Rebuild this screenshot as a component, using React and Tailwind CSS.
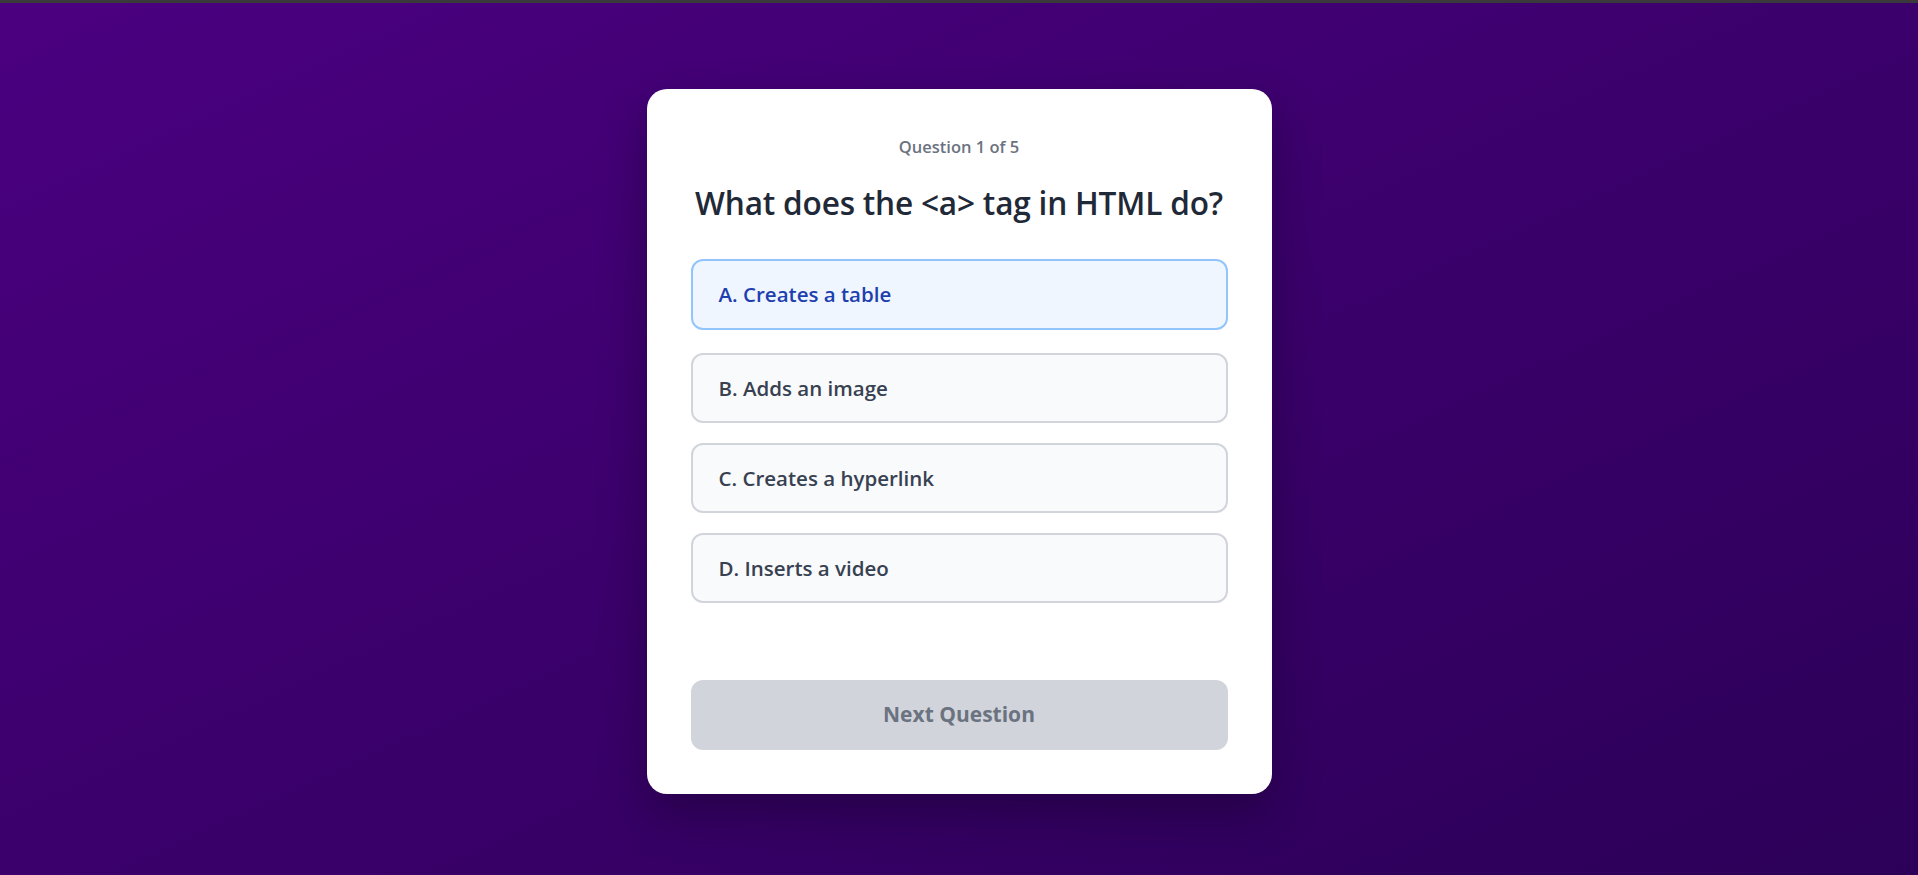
import React from "react";

const options = [
  { label: "A. Creates a table", selected: true },
  { label: "B. Adds an image" },
  { label: "C. Creates a hyperlink" },
  { label: "D. Inserts a video" },
];

export default function App() {
  return (
    <div
      className="w-full h-[875px] overflow-hidden flex flex-col bg-gradient-to-br from-[#4b0080] to-[#2c0058]"
      style={{ fontFamily: '"Open Sans", "Noto Sans", sans-serif' }}
    >
      <div className="h-[3px] w-full bg-[#3a3a3c]" />
      <div className="flex justify-center pt-[86px]">
        <div className="w-[625px] bg-white rounded-[20px] shadow-[0_20px_45px_rgba(20,0,40,0.45)] px-[44px] pt-[45px] pb-[44px]">
          <p className="text-center text-[16.5px] leading-[25px] font-semibold text-[#6b7280]">
            Question 1 of 5
          </p>
          <h1 className="mt-[24px] text-center text-[31.6px] leading-[40px] font-semibold text-[#1f2937] tracking-[-0.2px]">
            What does the &lt;a&gt; tag in HTML do?
          </h1>
          <div className="mt-[36px] flex flex-col">
            {options.map((o, i) => (
              <button
                key={o.label}
                className={`h-[70px] w-full text-left pl-[26px] rounded-[12px] border-2 text-[20.5px] font-semibold ${
                  o.selected
                    ? "bg-[#eff6ff] border-[#93c5fd] text-[#1e40af] h-[71px]"
                    : "bg-[#f9fafb] border-[#d1d5db] text-[#374151]"
                } ${i === 1 ? "mt-[23px]" : i > 1 ? "mt-[20px]" : ""}`}
              >
                {o.label}
              </button>
            ))}
          </div>
          <button className="mt-[77px] h-[70px] w-full rounded-[12px] bg-[#d1d5db] text-[#6b7280] text-[21px] font-bold">
            Next Question
          </button>
        </div>
      </div>
    </div>
  );
}
